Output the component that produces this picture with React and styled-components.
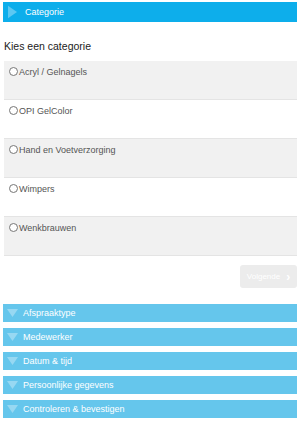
import React from 'react'
import styled, { createGlobalStyle } from 'styled-components'

const categories = [
    'Acryl / Gelnagels',
    'OPI GelColor',
    'Hand en Voetverzorging',
    'Wimpers',
    'Wenkbrauwen',
]

const steps = [
    'Afspraaktype',
    'Medewerker',
    'Datum & tijd',
    'Persoonlijke gegevens',
    'Controleren & bevestigen',
]

const App = () => {
    return(
        <Page>
            <GlobalStyle />
            <ActiveBar>
                <Arrow viewBox='0 0 10 14'><polygon points='0,0 10,7 0,14' /></Arrow>
                Categorie
            </ActiveBar>

            <Title>Kies een categorie</Title>

            <List>
                {categories.map((name, i) => (
                    <Option key={name} $shaded={i % 2 === 0}>
                        <Radio type='radio' name='categorie' />
                        {name}
                    </Option>
                ))}
            </List>

            <Footer>
                <NextButton>Volgende <span>&#x203A;</span></NextButton>
            </Footer>

            <Steps>
                {steps.map(step => (
                    <StepBar key={step}>
                        <DownArrow viewBox='0 0 14 10'><polygon points='0,0 14,0 7,10' /></DownArrow>
                        {step}
                    </StepBar>
                ))}
            </Steps>
        </Page>
    )
}

export default App


//GLOBAL
const GlobalStyle = createGlobalStyle`
    body{
        margin: 0;
        background: #fff;
        font-family: "Liberation Sans", Arial, sans-serif;
    }
`;

//PAGE
const Page = styled.div`
    width: 300px;
    padding: 2px 3px 0 3px;
    box-sizing: border-box;
`;

//ACTIVE STEP HEADER
const ActiveBar = styled.div`
    height: 20px;
    background: #0daeeb;
    color: #fff;
    font-size: 9px;
    display: flex;
    align-items: center;
    gap: 8px;
    padding-left: 5px;
`;

const Arrow = styled.svg`
    width: 9px;
    height: 14px;
    fill: #5cc8f2;
`;

//TITLE
const Title = styled.h2`
    margin: 17px 0 0 1px;
    font-size: 10.5px;
    font-weight: 400;
    color: #222;
    line-height: 14px;
    height: 22px;
`;

//OPTION LIST
const List = styled.div`
    display: flex;
    flex-direction: column;
    margin-left: 1px;
`;

const Option = styled.label`
    height: 39px;
    box-sizing: border-box;
    padding: 6px 0 0 5px;
    display: flex;
    align-items: flex-start;
    font-size: 9px;
    line-height: 10px;
    color: #555;
    background: ${p => p.$shaded ? '#f1f1f1' : '#fff'};
    border-bottom: 1px solid #e4e4e4;
`;

const Radio = styled.input`
    width: 9px;
    height: 9px;
    margin: 0 1px 0 0;
`;

//FOOTER
const Footer = styled.div`
    display: flex;
    justify-content: flex-end;
    padding: 9px 0 0;
    height: 48px;
    box-sizing: border-box;
`;

const NextButton = styled.button`
    width: 57px;
    height: 23px;
    border: none;
    border-radius: 3px;
    background: #ececec;
    color: #fff;
    font-family: inherit;
    font-size: 8px;
    display: flex;
    align-items: center;
    justify-content: center;
    gap: 6px;
    padding: 0;
    span{
        font-size: 12px;
        font-weight: 700;
    }
`;

//COLLAPSED STEPS
const Steps = styled.div`
    display: flex;
    flex-direction: column;
    gap: 6px;
`;

const StepBar = styled.div`
    height: 18px;
    background: #65c6ec;
    color: #fff;
    font-size: 9px;
    display: flex;
    align-items: center;
    gap: 5px;
    padding-left: 4px;
`;

const DownArrow = styled.svg`
    width: 11px;
    height: 8px;
    fill: #97d8f2;
`;
